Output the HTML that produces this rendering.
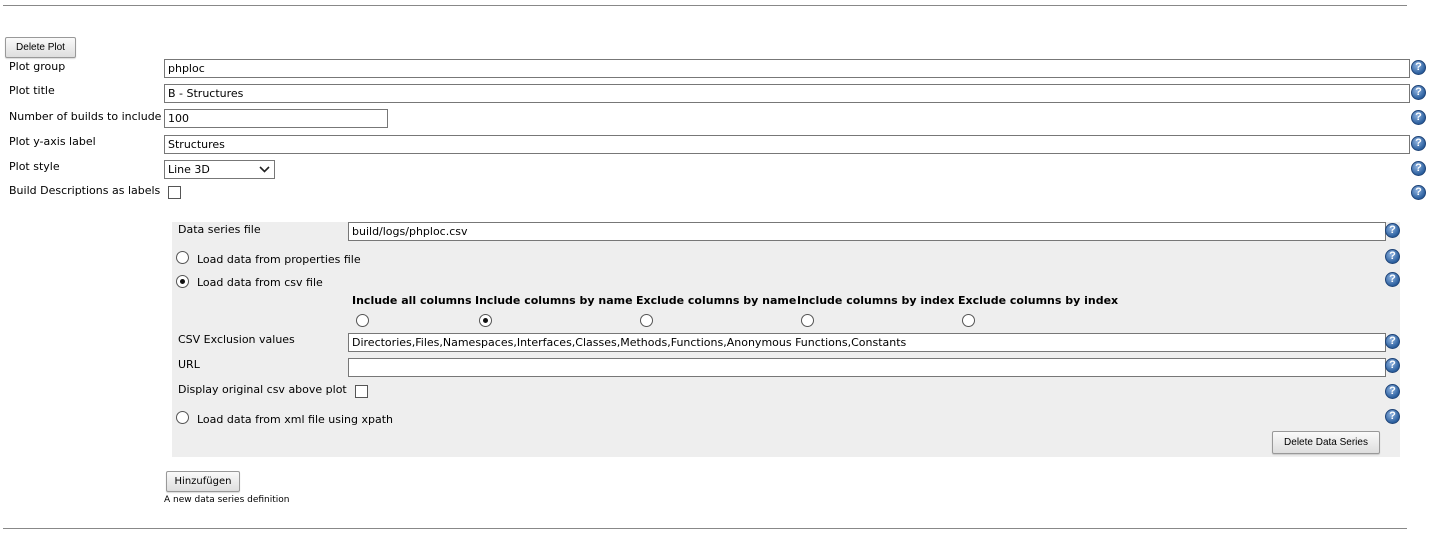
<!DOCTYPE html>
<html><head><meta charset="utf-8"><style>
*{box-sizing:border-box}
body{margin:0;width:1430px;height:535px;background:#fff;position:relative;font-family:"DejaVu Sans","Liberation Sans",sans-serif;font-size:11px;color:#000;overflow:hidden}
.a{position:absolute;white-space:nowrap}
.hr{position:absolute;left:3px;width:1404px;height:1px;background:#888}
.in{position:absolute;border:1px solid #777;background:#fff;height:19px;padding:2px 3px;line-height:14px;font-size:11px}
.btn{position:absolute;border:1px solid #999;border-radius:2px;background:linear-gradient(#fafafa,#dedede);font-family:"Liberation Sans",sans-serif;font-size:10px;text-align:center;box-shadow:0 1px 1px rgba(0,0,0,.15)}
.h{position:absolute;width:15px;height:15px;border-radius:50%;background:radial-gradient(circle at 40% 35%,#8fb3e0,#2b5f9e 70%);border:1px solid #1f4478;color:#fff;font:bold 11px "Liberation Sans",sans-serif;text-align:center;line-height:13px}
.r{position:absolute;width:13px;height:13px;border-radius:50%;border:1px solid #555;background:#fff}
.r.on::after{content:"";position:absolute;left:3px;top:3px;width:5px;height:5px;border-radius:50%;background:#111}
.cb{position:absolute;width:13px;height:13px;border:1px solid #555;background:#fff}
b{font-weight:bold}
</style></head><body>
<div class="hr" style="top:5px"></div>
<div class="btn" style="left:5px;top:37px;width:71px;height:21px;line-height:19px">Delete Plot</div>

<div class="a" style="left:9px;top:60px">Plot group</div>
<div class="in" style="left:164px;top:59px;width:1246px">phploc</div>
<div class="a" style="left:9px;top:84px">Plot title</div>
<div class="in" style="left:164px;top:84px;width:1246px">B - Structures</div>
<div class="a" style="left:9px;top:110px">Number of builds to include</div>
<div class="in" style="left:164px;top:109px;width:224px">100</div>
<div class="a" style="left:9px;top:135px">Plot y-axis label</div>
<div class="in" style="left:164px;top:135px;width:1246px">Structures</div>
<div class="a" style="left:9px;top:160px">Plot style</div>
<div class="in" style="left:164px;top:160px;width:111px">Line 3D<svg style="position:absolute;right:4px;top:5px" width="11" height="7"><path d="M1 1L5.5 5.5L10 1" stroke="#222" stroke-width="1.6" fill="none"/></svg></div>
<div class="a" style="left:9px;top:184px">Build Descriptions as labels</div>
<div class="cb" style="left:168px;top:186px"></div>

<div class="h" style="left:1411px;top:60px">?</div>
<div class="h" style="left:1411px;top:85px">?</div>
<div class="h" style="left:1411px;top:110px">?</div>
<div class="h" style="left:1411px;top:136px">?</div>
<div class="h" style="left:1411px;top:161px">?</div>
<div class="h" style="left:1411px;top:185px">?</div>

<div style="position:absolute;left:172px;top:222px;width:1228px;height:235px;background:#eee"></div>
<div class="a" style="left:178px;top:223px">Data series file</div>
<div class="in" style="left:348px;top:222px;width:1038px">build/logs/phploc.csv</div>
<div class="r" style="left:176px;top:251px"></div>
<div class="a" style="left:197px;top:253px">Load data from properties file</div>
<div class="r on" style="left:176px;top:275px"></div>
<div class="a" style="left:197px;top:276px">Load data from csv file</div>
<div class="a" style="left:352px;top:294px"><b>Include all columns</b></div>
<div class="a" style="left:475px;top:294px"><b>Include columns by name</b></div>
<div class="a" style="left:636px;top:294px"><b>Exclude columns by name</b></div>
<div class="a" style="left:797px;top:294px"><b>Include columns by index</b></div>
<div class="a" style="left:958px;top:294px"><b>Exclude columns by index</b></div>
<div class="r" style="left:356px;top:314px"></div>
<div class="r on" style="left:479px;top:314px"></div>
<div class="r" style="left:640px;top:314px"></div>
<div class="r" style="left:801px;top:314px"></div>
<div class="r" style="left:962px;top:314px"></div>
<div class="a" style="left:178px;top:333px">CSV Exclusion values</div>
<div class="in" style="left:348px;top:333px;width:1038px">Directories,Files,Namespaces,Interfaces,Classes,Methods,Functions,Anonymous Functions,Constants</div>
<div class="a" style="left:178px;top:358px">URL</div>
<div class="in" style="left:348px;top:358px;width:1038px"></div>
<div class="a" style="left:178px;top:383px">Display original csv above plot</div>
<div class="cb" style="left:355px;top:385px"></div>
<div class="r" style="left:176px;top:411px"></div>
<div class="a" style="left:197px;top:413px">Load data from xml file using xpath</div>
<div class="h" style="left:1385px;top:223px">?</div>
<div class="h" style="left:1385px;top:249px">?</div>
<div class="h" style="left:1385px;top:272px">?</div>
<div class="h" style="left:1385px;top:334px">?</div>
<div class="h" style="left:1385px;top:358px">?</div>
<div class="h" style="left:1385px;top:384px">?</div>
<div class="h" style="left:1385px;top:409px">?</div>
<div class="btn" style="left:1272px;top:431px;width:108px;height:23px;line-height:21px">Delete Data Series</div>

<div class="btn" style="left:166px;top:471px;width:74px;height:21px;line-height:19px;font-family:'DejaVu Sans',sans-serif">Hinzufügen</div>
<div class="a" style="left:164px;top:495px;font-size:9px">A new data series definition</div>
<div class="hr" style="top:528px"></div>
</body></html>
